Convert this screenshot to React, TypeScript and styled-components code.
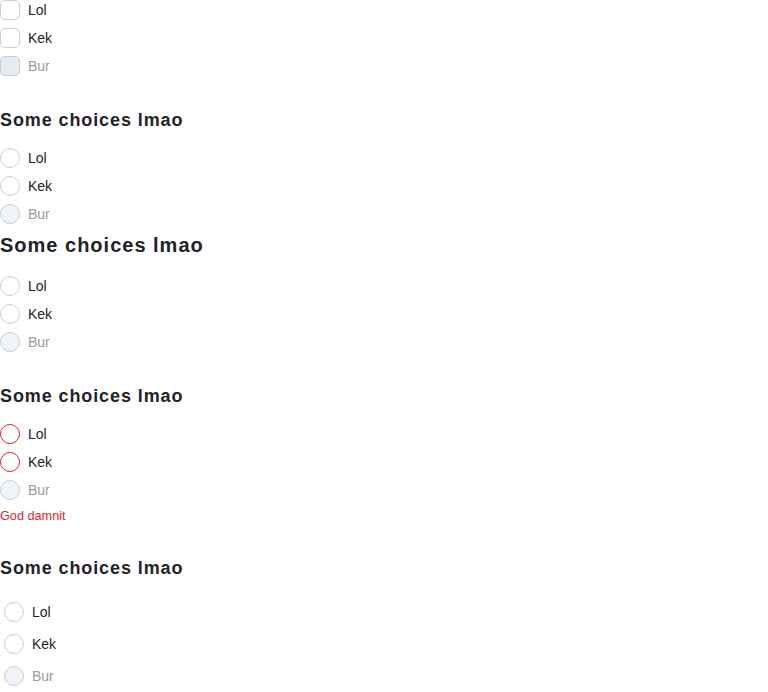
import styled, { createGlobalStyle, css } from "styled-components";

const GlobalStyle = createGlobalStyle`
  body {
    margin: 0;
    font-family: "Liberation Sans", Arial, sans-serif;
    color: #212529;
    background: #fff;
  }
`;

const Page = styled.div`
  display: flex;
  flex-direction: column;
`;

const Group = styled.div<{ $gap?: number }>`
  display: flex;
  flex-direction: column;
  gap: ${(p) => p.$gap ?? 8}px;
`;

const Heading = styled.h3<{ $size?: number; $top?: number; $bottom?: number }>`
  margin: ${(p) => p.$top ?? 33}px 0 ${(p) => p.$bottom ?? 17}px;
  font-size: ${(p) => p.$size ?? 18}px;
  line-height: ${(p) => (p.$size ?? 18) + 4}px;
  font-weight: 700;
  letter-spacing: 0.05em;
  color: #1f2329;
`;

const Row = styled.label<{ $spaced?: boolean }>`
  display: flex;
  align-items: center;
  gap: 8px;
  height: 20px;
  font-size: 14px;
  line-height: 20px;
  ${(p) =>
    p.$spaced &&
    css`
      height: 32px;
      padding: 0 4px;
    `}
`;

const Box = styled.span<{ $round?: boolean; $disabled?: boolean; $error?: boolean }>`
  box-sizing: border-box;
  width: 20px;
  height: 20px;
  flex: none;
  border: 1px solid ${(p) => (p.$error ? "#d9262f" : "#c3cfdd")};
  border-radius: ${(p) => (p.$round ? "50%" : "5px")};
  background: ${(p) => (p.$disabled ? (p.$round ? "#f1f3f6" : "#e6ebf0") : "#fff")};
`;

const Label = styled.span<{ $disabled?: boolean }>`
  color: ${(p) => (p.$disabled ? "#9a9a9a" : "#212529")};
`;

const ErrorText = styled.div`
  margin-top: 9px;
  font-size: 12.7px;
  line-height: 14px;
  color: #d9262f;
`;

type Opt = { label: string; disabled?: boolean };
const options: Opt[] = [{ label: "Lol" }, { label: "Kek" }, { label: "Bur", disabled: true }];

const Choices = ({
  round,
  error,
  spaced,
}: {
  round?: boolean;
  error?: boolean;
  spaced?: boolean;
}) => (
  <Group $gap={spaced ? 0 : 8}>
    {options.map((o) => (
      <Row key={o.label} $spaced={spaced}>
        <Box $round={round} $disabled={o.disabled} $error={error && !o.disabled} />
        <Label $disabled={o.disabled}>{o.label}</Label>
      </Row>
    ))}
  </Group>
);

export default function App() {
  return (
    <Page>
      <GlobalStyle />
      <Choices />
      <Heading>Some choices lmao</Heading>
      <Choices round />
      <Heading $size={20} $top={9} $bottom={19}>
        Some choices lmao
      </Heading>
      <Choices round />
      <Heading>Some choices lmao</Heading>
      <Choices round error />
      <ErrorText>God damnit</ErrorText>
      <Heading $top={34}>Some choices lmao</Heading>
      <Choices round spaced />
    </Page>
  );
}
